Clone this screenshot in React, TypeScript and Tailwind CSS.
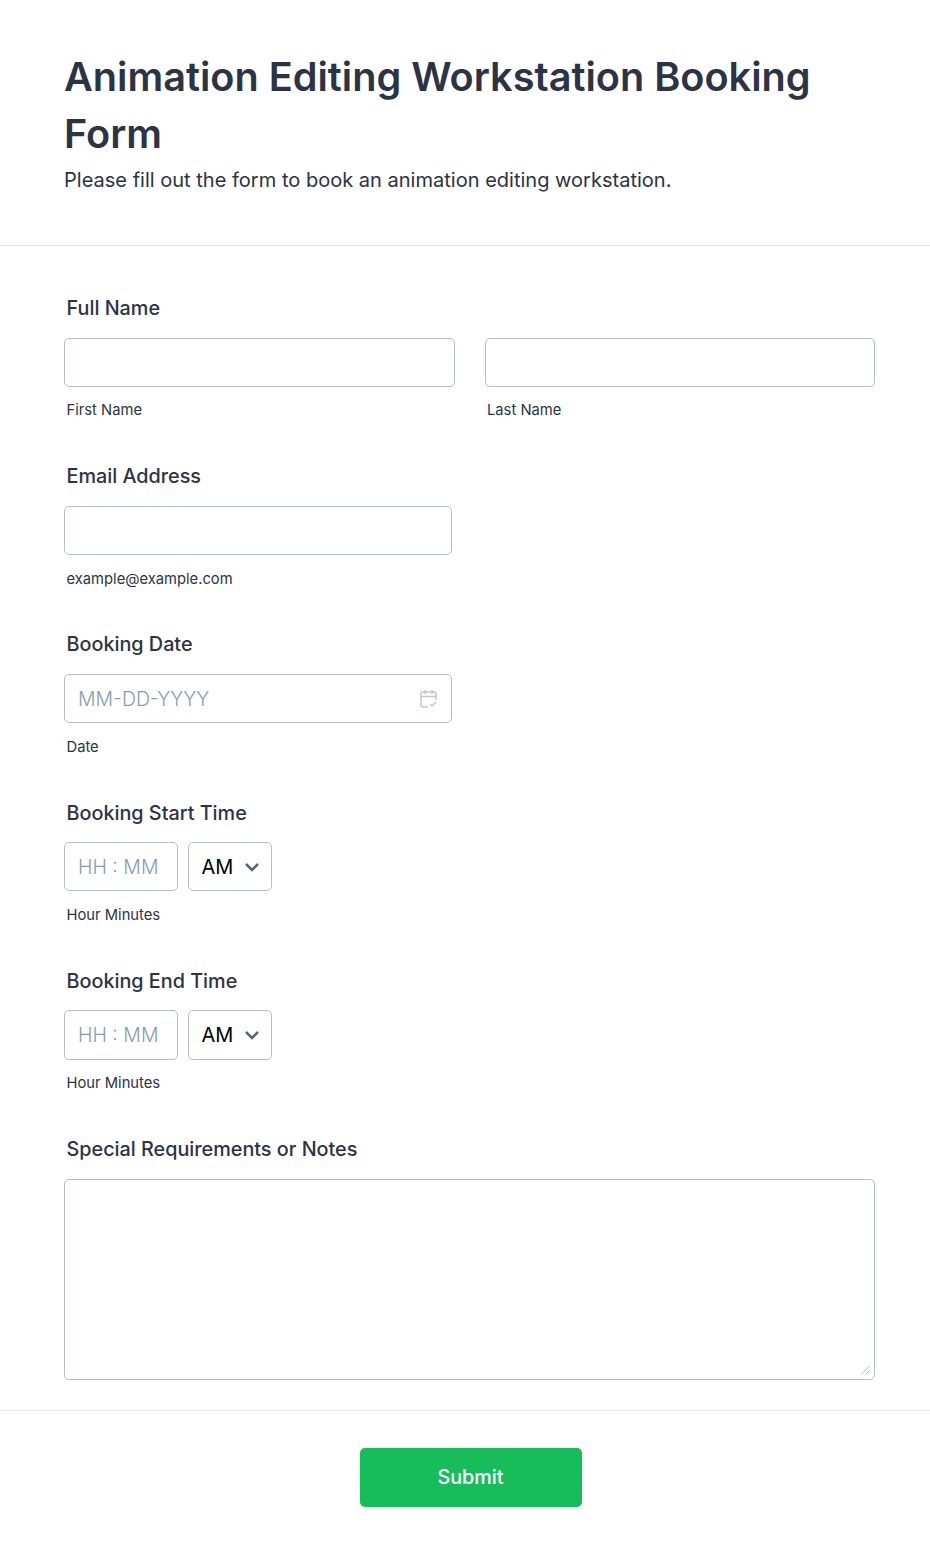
import React from 'react';

const inputClass =
  'h-[49.2px] border border-[#b8bdc9] rounded-[5px] bg-white px-[13px] text-[20px] text-[#2c3345] outline-none placeholder:text-[19.5px] placeholder:font-light placeholder:text-[#879cb3]';

const Label: React.FC<{ children: React.ReactNode }> = ({ children }) => (
  <label className="block h-[30px] pl-[2.5px] text-[19.8px] leading-[30px] font-[450] text-[#2c3345]">{children}</label>
);

const SubLabel: React.FC<{ children: React.ReactNode }> = ({ children }) => (
  <div className="mt-[12.6px] pl-[2.5px] text-[14.75px] leading-[22px] text-[#2c3345]">{children}</div>
);

const TimeField: React.FC<{ label: string }> = ({ label }) => (
  <div className="h-[168.2px]">
    <Label>{label}</Label>
    <div className="mt-[14.6px] flex gap-[10px]">
      <input className={`${inputClass} w-[114px]`} placeholder="HH : MM" />
      <div className="relative w-[84px]">
        <select className={`${inputClass} w-full appearance-none !pl-[12.5px] text-black`} defaultValue="AM">
          <option>AM</option>
          <option>PM</option>
        </select>
        <svg
          className="absolute right-[12px] top-[20px] pointer-events-none"
          width="16"
          height="10"
          viewBox="0 0 16 10"
          fill="none"
        >
          <path d="M2 2 8 8 14 2" stroke="#57647e" strokeWidth="2.5" />
        </svg>
      </div>
    </div>
    <SubLabel>Hour Minutes</SubLabel>
  </div>
);

export default function App() {
  return (
    <div className="min-h-[1557px] bg-white font-['Inter',sans-serif]">
      <div className="h-[246px] border-b border-[#dfe1e6] px-[64px] pt-[49px]">
        <h1 className="text-[39.65px] leading-[57px] font-semibold text-[#2c3345]">
          Animation Editing Workstation Booking Form
        </h1>
        <p className="text-[20.05px] leading-[34px] font-[440] text-[#2c3345]">
          Please fill out the form to book an animation editing workstation.
        </p>
      </div>

      <form className="pl-[64px] pr-[55px] pt-[47px]">
        <div className="h-[168.2px]">
          <Label>Full Name</Label>
          <div className="mt-[14.6px] flex gap-[30px]">
            <div className="flex-1">
              <input className={`${inputClass} w-full`} />
              <SubLabel>First Name</SubLabel>
            </div>
            <div className="flex-1">
              <input className={`${inputClass} w-full`} />
              <SubLabel>Last Name</SubLabel>
            </div>
          </div>
        </div>

        <div className="h-[168.2px]">
          <Label>Email Address</Label>
          <div className="mt-[14.6px]">
            <input className={`${inputClass} w-[388px]`} />
            <SubLabel>example@example.com</SubLabel>
          </div>
        </div>

        <div className="h-[168.2px]">
          <Label>Booking Date</Label>
          <div className="relative mt-[14.6px] w-[388px]">
            <input className={`${inputClass} w-full`} placeholder="MM-DD-YYYY" />
            <svg
              className="absolute right-[13px] top-[15px]"
              width="20"
              height="20"
              viewBox="0 0 20 20"
              fill="none"
              stroke="#c0c7d4"
              strokeWidth="1.5"
            >
              <path d="M9 18H4a2 2 0 0 1-2-2V5a2 2 0 0 1 2-2h11a2 2 0 0 1 2 2v6" />
              <path d="M2 7.5h15M6 1v4M13 1v4" />
              <path d="M11 15l2 2 4-4" />
            </svg>
          </div>
          <SubLabel>Date</SubLabel>
        </div>

        <TimeField label="Booking Start Time" />
        <TimeField label="Booking End Time" />

        <div>
          <Label>Special Requirements or Notes</Label>
          <div className="relative mt-[14.6px]">
            <textarea className="block h-[201px] w-full resize-none rounded-[5px] border border-[#b8bdc9] bg-white outline-none" />
            <svg className="absolute bottom-[5px] right-[5px]" width="10" height="10" viewBox="0 0 10 10" fill="none" stroke="#b3b8c4">
              <path d="M1 9.5 9.5 1M5.5 9.5 9.5 5.5" />
            </svg>
          </div>
        </div>
      </form>

      <div className="mt-[30.4px] flex justify-center border-t border-[#e6e8ec] pt-[37px]">
        <button
          type="button"
          className="ml-[11px] h-[59px] w-[222px] rounded-[5px] bg-[#18bd5b] pt-px text-[19.8px] font-[470] text-white"
        >
          Submit
        </button>
      </div>
    </div>
  );
}
